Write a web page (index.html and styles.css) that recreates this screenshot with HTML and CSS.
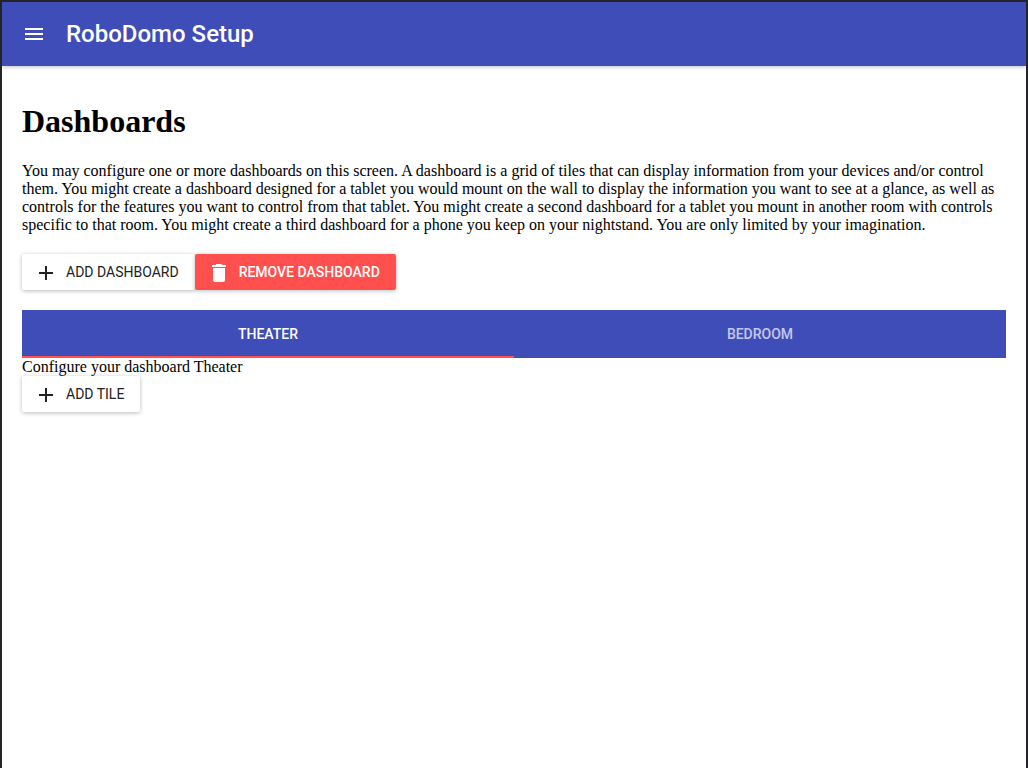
FILE: index.html
```html
<!DOCTYPE html>
<html lang="en">
<head>
<meta charset="utf-8">
<meta name="viewport" content="width=device-width, initial-scale=1">
<title>RoboDomo Setup</title>
<link rel="stylesheet" href="styles.css">
</head>
<body>
<header class="toolbar">
  <button class="menu-button" type="button" aria-label="Menu">
    <svg class="icon" viewBox="0 0 24 24" aria-hidden="true"><path d="M3 18h18v-2H3v2zm0-5h18v-2H3v2zm0-7v2h18V6H3z"/></svg>
  </button>
  <div class="toolbar-title">RoboDomo Setup</div>
</header>
<main class="content">
  <h1 class="heading">Dashboards</h1>
  <p class="intro">You may configure one or more dashboards on this screen. A dashboard is a grid of tiles that can display information from your devices and/or control them. You might create a dashboard designed for a tablet you would mount on the wall to display the information you want to see at a glance, as well as controls for the features you want to control from that tablet. You might create a second dashboard for a tablet you mount in another room with controls specific to that room. You might create a third dashboard for a phone you keep on your nightstand. You are only limited by your imagination.</p>
  <div class="actions">
    <button class="button" type="button"><svg class="icon" viewBox="0 0 24 24" aria-hidden="true"><path d="M19 14h-6v6h-2v-6H5v-2h6V6h2v6h6v2z"/></svg>Add dashboard</button>
    <button class="button button-danger" type="button"><svg class="icon" viewBox="0 0 24 24" aria-hidden="true"><path d="M6 20c0 1.1.9 2 2 2h8c1.1 0 2-.9 2-2V8H6v12zM19 5h-3.5l-1-1h-5l-1 1H5v2h14V5z"/></svg>Remove dashboard</button>
  </div>
  <div class="tabs" role="tablist">
    <button class="tab tab-active" type="button" role="tab" aria-selected="true">Theater</button>
    <button class="tab" type="button" role="tab" aria-selected="false">Bedroom</button>
  </div>
  <section class="panel" role="tabpanel">
    <div>Configure your dashboard Theater</div>
    <button class="button" type="button"><svg class="icon" viewBox="0 0 24 24" aria-hidden="true"><path d="M19 14h-6v6h-2v-6H5v-2h6V6h2v6h6v2z"/></svg>Add tile</button>
  </section>
</main>
</body>
</html>
```
FILE: styles.css
```css
* {
  box-sizing: border-box;
}

body {
  margin: 0;
  min-height: 100vh;
  border: 2px solid #242428;
  border-bottom: 0;
  background: #fff;
  color: #000;
  font: 16px/18px "Liberation Serif", "Times New Roman", serif;
}

.icon {
  width: 24px;
  height: 24px;
  flex: none;
  fill: currentColor;
}

.toolbar {
  display: flex;
  align-items: center;
  gap: 8px;
  height: 64px;
  padding: 0 8px;
  background: #3f4db8;
  color: #fff;
  box-shadow: 0 1px 4px rgba(0, 0, 0, 0.25);
}

.menu-button {
  display: flex;
  padding: 12px;
  border: 0;
  background: none;
  color: inherit;
}

.toolbar-title {
  font: 500 24px/32px Roboto, sans-serif;
}

.content {
  padding: 36px 20px 20px;
}

.heading {
  margin: 0 0 22px;
  font-size: 32px;
  line-height: 38px;
}

.intro {
  margin: 0 0 20px;
}

.actions {
  display: flex;
  margin-bottom: 20px;
}

.button {
  display: flex;
  align-items: center;
  gap: 8px;
  height: 36px;
  padding: 0 16px 0 12px;
  border: 0;
  border-radius: 2px;
  background: #fff;
  color: #212121;
  font: 400 14px/36px Roboto, sans-serif;
  text-transform: uppercase;
  white-space: nowrap;
  box-shadow: 0 1px 4px rgba(0, 0, 0, 0.28);
}

.button-danger {
  background: #ff4f4e;
  color: #fff;
  font-weight: 500;
}

.tabs {
  display: flex;
  background: #3f4db8;
}

.tab {
  flex: 1;
  height: 48px;
  padding: 0;
  border: 0;
  background: none;
  color: rgba(255, 255, 255, 0.7);
  font: 500 14px/48px Roboto, sans-serif;
  text-transform: uppercase;
}

.tab-active {
  box-shadow: inset 0 -2px #ff4f4e;
  color: #fff;
}
```
